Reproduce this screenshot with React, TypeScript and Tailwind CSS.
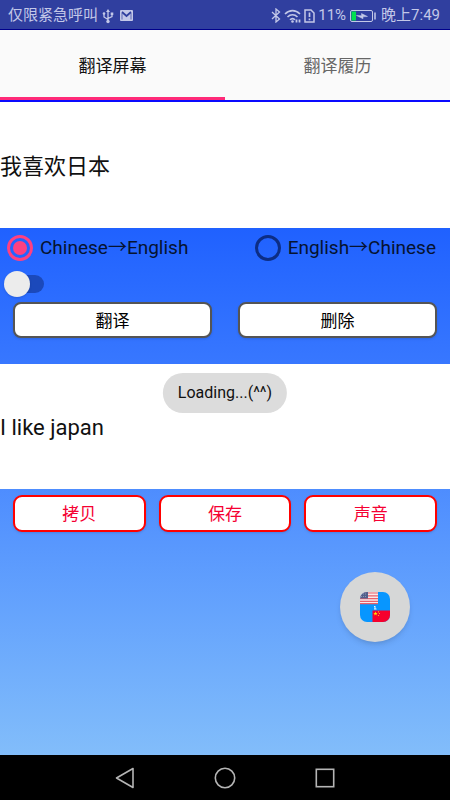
import { useState } from 'react';

const StatusBar = () => {
  return (
    <header className="flex h-[30px] items-center justify-between border-b border-[#00008b] bg-[#303f9f] pl-2 pr-[10px] pt-[2px] text-[#c3c8e8]">
      <div className="flex items-center gap-1">
        <span className="text-[15px]">仅限紧急呼叫</span>
        <svg className="h-4 w-3" viewBox="0 0 12 16" fill="none" stroke="currentColor" aria-hidden="true">
          <path d="M6 3v10M2 6v3l4 2.500M10 6v2.500L6 10.500" strokeWidth="1.300" />
          <path d="M4 4l2-3 2 3z" fill="currentColor" stroke="none" />
          <circle cx="6" cy="13.500" r="1.700" fill="currentColor" stroke="none" />
          <circle cx="2" cy="5.500" r="1.300" fill="currentColor" stroke="none" />
          <path d="M8.700 4.500h2.600V7H8.700z" fill="currentColor" stroke="none" />
        </svg>
        <svg className="ml-[2px] h-[11px] w-[13px]" viewBox="0 0 13 11" aria-hidden="true">
          <rect width="13" height="11" rx="1" fill="currentColor" />
          <path d="M2 2l4.500 4L11 2" fill="none" stroke="#303f9f" strokeWidth="1.700" />
          <path d="M2 3v6.500M11 3v6.500" fill="none" stroke="#303f9f" strokeWidth="0.700" />
        </svg>
      </div>

      <div className="flex items-center">
        <svg className="h-[15px] w-[10px]" viewBox="0 0 10 15" fill="none" stroke="currentColor" strokeWidth="1.300" aria-hidden="true">
          <path d="M1 4l7.500 7L5 14V1l3.500 3L1 11" />
        </svg>
        <svg className="ml-[3px] h-[14px] w-[17px]" viewBox="0 0 17 14" fill="none" stroke="currentColor" strokeWidth="1.600" aria-hidden="true">
          <path d="M1 5c4.500-4.500 10.500-4.500 15 0M3.500 8c3-3 7-3 10 0M6 10.800c1.500-1.500 3.500-1.500 5 0" />
          <circle cx="8.500" cy="12.500" r="1.300" fill="currentColor" stroke="none" />
          <path d="M12.500 10.500v3M15.500 10.500v3" strokeWidth="1.800" />
        </svg>
        <svg className="ml-[3px] h-[14px] w-[11px]" viewBox="0 0 11 14" fill="none" stroke="currentColor" strokeWidth="1.500" aria-hidden="true">
          <path d="M1 1h6l3 3v9H1z" />
          <path d="M5.500 3.500v4.500M5.500 9.500v1.800" strokeWidth="1.700" />
        </svg>
        <span className="ml-[3px] text-[15px]">11%</span>
        <svg className="ml-1 h-[12px] w-[26px]" viewBox="0 0 26 12" aria-hidden="true">
          <rect x="0.500" y="0.500" width="22" height="11" rx="1.500" fill="none" stroke="currentColor" />
          <rect x="1.500" y="1.500" width="4.500" height="9" fill="#00e04f" />
          <path d="M6.500 5.500l5 .2V3.500l6 3-4.500.3v2z" fill="currentColor" stroke="currentColor" strokeWidth="0.500" />
          <path d="M25 2.500v7" stroke="currentColor" strokeWidth="1.500" />
        </svg>
        <span className="ml-[5px] text-[15px]">晚上7:49</span>
      </div>
    </header>
  );
};

const FlagsIcon = () => {
  return (
    <svg className="h-[30px] w-[30px]" viewBox="0 0 30 30" aria-hidden="true">
      <clipPath id="flags">
        <rect width="30" height="30" rx="7" />
      </clipPath>
      <g clipPath="url(#flags)">
        <rect width="30" height="30" fill="#0796ff" />
        <rect width="18" height="12" fill="#f7e9ea" />
        <path d="M0 1h18M0 3.800h18M0 6.600h18M0 9.400h18M0 11.700h18" stroke="#e9606a" strokeWidth="1.200" />
        <rect width="8" height="6.500" fill="#52608c" />
        <path d="M1 2h6M1 4.500h6" stroke="#9da5bd" strokeWidth="0.800" strokeDasharray="1 1" />
        <rect x="12.500" y="18.500" width="18" height="12" fill="#f5002d" />
        <path d="M15.500 19.500l.6 1.400h1.500l-1.200 1 .5 1.500-1.400-.9-1.400.9.500-1.500-1.200-1h1.500z" fill="#ffdf00" />
        <circle cx="18.500" cy="19.800" r="0.600" fill="#ffdf00" />
        <circle cx="19.500" cy="21.500" r="0.600" fill="#ffdf00" />
        <circle cx="18.500" cy="23.500" r="0.600" fill="#ffdf00" />
        <path d="M14 15l1-1v3M14 17h2.500" fill="none" stroke="#e8f4ff" />
      </g>
    </svg>
  );
};

const App = () => {
  const [direction, setDirection] = useState('zh-en');

  const radioClass =
    'm-0 h-[26px] w-[26px] appearance-none rounded-full border-[3px] border-[#0c2d85] p-[3px] checked:border-[#ff4081] checked:bg-[#ff4081] checked:bg-clip-content';
  const inputClass = 'block w-full resize-none bg-white text-[22px] leading-8 text-[#111] outline-none';
  const darkButton =
    'h-9 rounded-lg border-2 border-[#555] bg-white pt-[3px] text-[17px] text-black shadow-sm';
  const redButton =
    'h-[37px] rounded-[9px] border-2 border-[#ff0000] bg-white pt-[3px] text-[17px] text-[#f50032] shadow-sm';

  return (
    <div className="flex min-h-screen flex-col font-[Roboto,'Noto_Sans_CJK_SC',sans-serif]">
      <StatusBar />

      <nav className="grid grid-cols-2 bg-[#fafafa] text-[17px]">
        <button
          type="button"
          className="h-[70px] border-b-[3px] border-[#ff2a78] pt-[7px] text-[#111]"
        >
          翻译屏幕
        </button>
        <button type="button" className="h-[70px] pt-1 text-[#666]">
          翻译履历
        </button>
      </nav>

      <main className="relative flex flex-1 flex-col border-t-2 border-[#0a0aff] bg-linear-to-b from-[#0848ff] via-[#4381ff] to-[#82bdfa]">
        <textarea
          aria-label="原文"
          className={`${inputClass} h-[126px] pt-[49px]`}
          defaultValue="我喜欢日本"
        />

        <section className="pb-[26px] pt-[7px]">
          <div className="flex justify-between pl-[7px] pr-[14px] text-[19px] leading-[26px] text-[#061330]">
            <label className="flex items-center gap-[7px]">
              <input
                type="radio"
                name="direction"
                className={radioClass}
                checked={direction === 'zh-en'}
                onChange={() => setDirection('zh-en')}
              />
              Chinese→English
            </label>
            <label className="flex items-center gap-[7px]">
              <input
                type="radio"
                name="direction"
                className={radioClass}
                checked={direction === 'en-zh'}
                onChange={() => setDirection('en-zh')}
              />
              English→Chinese
            </label>
          </div>

          <label className="relative ml-1 mt-[10px] flex h-[26px] w-10 items-center">
            <input type="checkbox" role="switch" aria-label="自动" className="peer sr-only" />
            <span className="ml-1 h-[18px] w-9 rounded-full bg-[#1b49bb]" />
            <span className="absolute left-0 top-0 h-[26px] w-[26px] rounded-full bg-[#ececec] shadow peer-checked:left-[14px]" />
          </label>

          <div className="mt-[5px] grid grid-cols-2 gap-[26px] px-[13px]">
            <button type="button" className={darkButton}>
              翻译
            </button>
            <button type="button" className={darkButton}>
              删除
            </button>
          </div>
        </section>

        <div className="relative">
          <textarea
            aria-label="译文"
            className={`${inputClass} h-[125px] pt-12`}
            defaultValue="I like japan"
          />
          {/* Toast */}
          <div
            role="status"
            className="absolute left-1/2 top-[9px] -translate-x-1/2 rounded-full bg-[#dcdcdc] px-[15px] py-2 text-base leading-6 text-[#111]"
          >
            Loading...(^^)
          </div>
        </div>

        <div className="grid grid-cols-3 gap-[13px] px-[13px] pt-[6px]">
          <button type="button" className={redButton}>
            拷贝
          </button>
          <button type="button" className={redButton}>
            保存
          </button>
          <button type="button" className={redButton}>
            声音
          </button>
        </div>

        <button
          type="button"
          aria-label="切换语言"
          className="absolute bottom-[113px] right-10 flex h-[70px] w-[70px] items-center justify-center rounded-full bg-[#d6d7d7] shadow-md"
        >
          <FlagsIcon />
        </button>
      </main>

      <footer className="flex h-[45px] items-center justify-center gap-[76px] bg-black text-[#b5b5b5]">
        <button type="button" aria-label="返回">
          <svg className="h-6 w-6" viewBox="0 0 24 24" fill="none" stroke="currentColor" strokeWidth="1.600" strokeLinejoin="round">
            <path d="M20 2.500v19L3.500 12z" />
          </svg>
        </button>
        <button type="button" aria-label="主页">
          <svg className="h-6 w-6" viewBox="0 0 24 24" fill="none" stroke="currentColor" strokeWidth="1.600">
            <circle cx="12" cy="12" r="9.700" />
          </svg>
        </button>
        <button type="button" aria-label="最近">
          <svg className="h-6 w-6" viewBox="0 0 24 24" fill="none" stroke="currentColor" strokeWidth="1.600">
            <rect x="3.300" y="3.300" width="17.400" height="17.400" />
          </svg>
        </button>
      </footer>
    </div>
  );
};

export default App;
